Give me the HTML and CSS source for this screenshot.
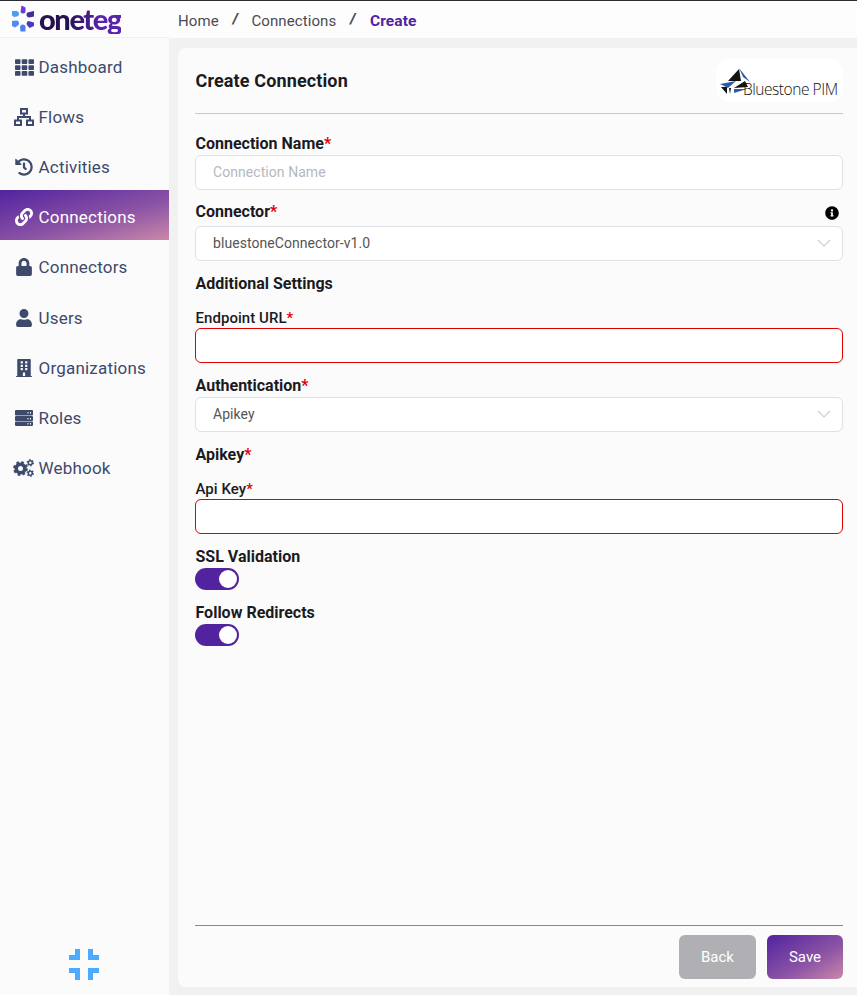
FILE: index.html
```html
<!DOCTYPE html>
<html lang="en">
<head>
<meta charset="utf-8">
<title>Create Connection</title>
<link rel="stylesheet" href="styles.css">
</head>
<body>
<div class="app">
  <aside class="side">
    <div class="brand">
      <svg class="brand-mark" viewBox="-12 -13.5 24 27" width="24" height="27">
        <path fill="#6d3bd6" d="M-1.500 -13 L2.500 -11 L2.500 -6.500 A2.800 2.800 0 0 1 -2.500 -6.500 Z"/>
        <path fill="#4a2a9c" d="M11 -7.500 L11 -2 L6.500 -1 A2.800 2.800 0 0 1 4.500 -6 Z"/>
        <path fill="#4a3ac0" d="M11 7.500 L6.500 9.500 L4.800 7.500 A2.800 2.800 0 0 1 5.500 2.500 L11 4 Z"/>
        <path fill="#4f7fe8" d="M2.500 13 L-2.500 13 L-3 8.500 A2.800 2.800 0 0 1 2.500 8 Z"/>
        <path fill="#4f8df0" d="M-11 7.500 L-11 2.500 L-6 2 A2.800 2.800 0 0 1 -5 7 L-8 9 Z"/>
        <path fill="#4aa0f0" d="M-11 -7.500 L-6.500 -7.500 A2.800 2.800 0 0 1 -6 -2 L-9 -1.500 L-11 -3 Z"/>
      </svg>
      <span class="brand-name">oneteg</span>
    </div>
    <nav class="nav">
      <a class="nav-item"><span class="nav-ico"><svg viewBox="0 0 512 512" width="19" height="19"><path d="M0 56q0-24 24-24h101q24 0 24 24v80q0 24-24 24H24q-24 0-24-24zM181 56q0-24 24-24h102q24 0 24 24v80q0 24-24 24H205q-24 0-24-24zM363 56q0-24 24-24h101q24 0 24 24v80q0 24-24 24H387q-24 0-24-24zM0 216q0-24 24-24h101q24 0 24 24v80q0 24-24 24H24q-24 0-24-24zM181 216q0-24 24-24h102q24 0 24 24v80q0 24-24 24H205q-24 0-24-24zM363 216q0-24 24-24h101q24 0 24 24v80q0 24-24 24H387q-24 0-24-24zM0 376q0-24 24-24h101q24 0 24 24v80q0 24-24 24H24q-24 0-24-24zM181 376q0-24 24-24h102q24 0 24 24v80q0 24-24 24H205q-24 0-24-24zM363 376q0-24 24-24h101q24 0 24 24v80q0 24-24 24H387q-24 0-24-24z"/></svg></span>Dashboard</a>
      <a class="nav-item"><span class="nav-ico"><svg viewBox="0 0 22 20" width="22" height="20"><path fill="none" stroke="currentColor" stroke-width="2" d="M8 2h6v4.500H8zM2 13.500h6V18H2zM14 13.500h6V18h-6zM11 6.500V10M5 13.500V10h12v3.500"/></svg></span>Flows</a>
      <a class="nav-item"><span class="nav-ico"><svg viewBox="0 0 512 512" width="18" height="18"><path d="M504 255.500c.3 136.600-111.200 248.400-247.800 248.500-59 0-113.200-20.500-155.800-54.900-11.100-8.900-11.900-25.500-1.800-35.600l11.300-11.300c8.600-8.600 22.400-9.600 31.900-2C173.100 425.100 212.800 440 256 440c101.700 0 184-82.300 184-184 0-101.700-82.300-184-184-184-48.800 0-93.100 19-126.100 49.900l50.800 50.800c10.100 10.100 2.900 27.300-11.300 27.300H24c-8.800 0-16-7.200-16-16V38.600c0-14.300 17.200-21.400 27.300-11.300l49.400 49.400C129.200 34.100 189.600 8 256 8c136.800 0 247.700 110.800 248 247.500zm-180.900 78.800l9.800-12.600c8.100-10.500 6.300-25.500-4.200-33.700L288 256.300V152c0-13.300-10.700-24-24-24h-16c-13.300 0-24 10.700-24 24v135.700l65.400 50.900c10.500 8.100 25.500 6.300 33.700-4.200z"/></svg></span>Activities</a>
      <a class="nav-item active"><span class="nav-ico"><svg viewBox="0 0 512 512" width="18" height="18"><path d="M326.600 185.400c59.700 59.800 58.900 155.700.4 214.600l-67.200 67.200c-59.300 59.300-155.700 59.300-215 0-59.300-59.300-59.300-155.700 0-215l37.100-37.100c9.800-9.800 26.800-3.300 27.300 10.600.6 17.700 3.800 35.500 9.700 52.700 2 5.800.6 12.300-3.800 16.600l-13.100 13.100c-28 28-28.900 73.700-1.200 102 28 28.600 74.100 28.700 102.300.5l67.200-67.200c28.200-28.200 28.100-73.800 0-101.800-3.700-3.700-7.400-6.600-10.300-8.600a16 16 0 0 1-6.900-12.600c-.4-10.600 3.300-21.500 11.700-29.800l21.100-21.100c5.500-5.500 14.200-6.200 20.600-1.700a152.500 152.500 0 0 1 20.500 17.200zM467.500 44.400c-59.300-59.300-155.700-59.300-215 0l-67.200 67.200c-.1.100-.3.300-.4.400-58.600 58.900-59.400 154.800.4 214.600a152.500 152.500 0 0 0 20.500 17.200c6.400 4.500 15.100 3.800 20.600-1.700l21.100-21.100c8.400-8.400 12.100-19.200 11.700-29.800a16 16 0 0 0-6.900-12.600c-2.900-2-6.600-4.900-10.300-8.600-28.100-28-28.200-73.600 0-101.800l67.200-67.200c28.200-28.200 74.300-28.100 102.300.5 27.700 28.300 26.800 74-1.200 102l-13.100 13.100c-4.400 4.300-5.800 10.800-3.800 16.600 5.900 17.200 9.100 35 9.700 52.700.5 13.900 17.500 20.400 27.300 10.600l37.100-37.100c59.300-59.300 59.300-155.700 0-215z"/></svg></span>Connections</a>
      <a class="nav-item"><span class="nav-ico"><svg viewBox="0 0 448 512" width="16" height="18"><path d="M400 224h-24v-72C376 68.200 307.800 0 224 0S72 68.200 72 152v72H48c-26.500 0-48 21.500-48 48v192c0 26.500 21.500 48 48 48h352c26.500 0 48-21.500 48-48V272c0-26.500-21.500-48-48-48zm-104 0H152v-72c0-39.700 32.300-72 72-72s72 32.300 72 72v72z"/></svg></span>Connectors</a>
      <a class="nav-item"><span class="nav-ico"><svg viewBox="0 0 448 512" width="16" height="18"><path d="M224 256c70.700 0 128-57.300 128-128S294.700 0 224 0 96 57.300 96 128s57.300 128 128 128zm89.600 32h-16.700c-22.200 10.200-46.900 16-72.900 16s-50.600-5.800-72.900-16h-16.700C60.200 288 0 348.200 0 422.400V464c0 26.500 21.500 48 48 48h352c26.500 0 48-21.500 48-48v-41.600c0-74.200-60.200-134.400-134.400-134.400z"/></svg></span>Users</a>
      <a class="nav-item"><span class="nav-ico"><svg viewBox="0 0 448 512" width="16" height="18"><path d="M436 480h-20V24c0-13.300-10.700-24-24-24H56C42.700 0 32 10.700 32 24v456H12c-6.600 0-12 5.400-12 12v20h448v-20c0-6.600-5.400-12-12-12zM128 76c0-6.600 5.400-12 12-12h40c6.600 0 12 5.400 12 12v40c0 6.600-5.400 12-12 12h-40c-6.600 0-12-5.400-12-12V76zm0 96c0-6.600 5.400-12 12-12h40c6.600 0 12 5.400 12 12v40c0 6.600-5.400 12-12 12h-40c-6.600 0-12-5.400-12-12v-40zm52 148h-40c-6.600 0-12-5.400-12-12v-40c0-6.600 5.400-12 12-12h40c6.600 0 12 5.400 12 12v40c0 6.600-5.400 12-12 12zm76 160h-64v-84c0-6.600 5.400-12 12-12h40c6.600 0 12 5.400 12 12v84zm64-172c0 6.600-5.400 12-12 12h-40c-6.600 0-12-5.400-12-12v-40c0-6.600 5.400-12 12-12h40c6.600 0 12 5.400 12 12v40zm0-96c0 6.600-5.400 12-12 12h-40c-6.600 0-12-5.400-12-12v-40c0-6.600 5.400-12 12-12h40c6.600 0 12 5.400 12 12v40zm0-96c0 6.600-5.400 12-12 12h-40c-6.600 0-12-5.400-12-12V76c0-6.600 5.400-12 12-12h40c6.600 0 12 5.400 12 12v40z"/></svg></span>Organizations</a>
      <a class="nav-item"><span class="nav-ico"><svg viewBox="0 0 18 16" width="18" height="16"><path d="M1 0h16q1 0 1 1v3.500q0 1-1 1H1q-1 0-1-1V1q0-1 1-1zM1 6h16v0q1 0 1 1v3q0 1-1 1H1q-1 0-1-1V7q0-1 1-1zM1 11.500h16q1 0 1 1V15q0 1-1 1H1q-1 0-1-1v-2.500q0-1 1-1z"/><path fill="#fbfbfc" d="M12.500 2h1v1.500h-1zM15 2h1v1.500h-1zM12.500 8h1v1.500h-1zM15 8h1v1.500h-1zM12.500 13h1v1.500h-1zM15 13h1v1.500h-1z"/></svg></span>Roles</a>
      <a class="nav-item"><span class="nav-ico"><svg viewBox="0 0 22 18" width="22" height="18"><g fill="none" stroke="currentColor"><circle cx="7.500" cy="9.500" r="4.300" stroke-width="3.600"/><circle cx="7.500" cy="9.500" r="6.200" stroke-width="2.400" stroke-dasharray="2.600 2.270"/><circle cx="17.300" cy="3.800" r="2" stroke-width="1.500"/><circle cx="17.300" cy="3.800" r="3.100" stroke-width="1.200" stroke-dasharray="1.500 1.750"/><circle cx="17.300" cy="14.200" r="2" stroke-width="1.500"/><circle cx="17.300" cy="14.200" r="3.100" stroke-width="1.200" stroke-dasharray="1.500 1.750"/></g></svg></span>Webhook</a>
    </nav>
    <div class="collapse">
      <svg viewBox="0 0 30 31" width="30" height="31"><path fill="none" stroke="#4dabff" stroke-width="5" d="M8.500 0v8.500H0M21.500 0v8.500H30M8.500 31V21.500H0M21.500 31V21.500H30"/></svg>
    </div>
  </aside>
  <div class="body">
    <header class="crumbs">
      <span class="crumb">Home</span><span class="sep">/</span>
      <span class="crumb">Connections</span><span class="sep">/</span>
      <span class="crumb current">Create</span>
    </header>
    <main class="main">
      <section class="card">
        <div class="card-head">
          <h1 class="title">Create Connection</h1>
          <div class="logo">
            <svg viewBox="0 0 33 28" width="33" height="28">
              <path fill="#141414" d="M9 14L20 2l2 12z"/>
              <path fill="#2e5cab" d="M20 1l11 14-7-5z"/>
              <path fill="#2e5cab" d="M1 17l16-3-8 7z"/>
              <path fill="#141414" d="M15 21l11-7 3 6z"/>
              <path fill="#141414" d="M2 20h6v7zM10 21h2l-1 6z"/>
              <path fill="#2e5cab" d="M15 26l13-4H15z"/>
            </svg>
            <span class="logo-text">Bluestone PIM</span>
          </div>
        </div>
        <form class="form">
          <div class="field"><label class="label">Connection Name<b class="req">*</b></label>
            <input class="input" type="text" placeholder="Connection Name"></div>
          <div class="field"><div class="label-row"><label class="label">Connector<b class="req">*</b></label>
            <svg class="info" viewBox="0 0 512 512" width="14" height="14"><path d="M256 8C119 8 8 119.100 8 256c0 137 111 248 248 248s248-111 248-248C504 119.100 393 8 256 8zm0 110c23.200 0 42 18.800 42 42s-18.800 42-42 42-42-18.800-42-42 18.800-42 42-42zm56 254c0 6.600-5.400 12-12 12h-88c-6.600 0-12-5.400-12-12v-24c0-6.600 5.400-12 12-12h12v-64h-12c-6.600 0-12-5.400-12-12v-24c0-6.600 5.400-12 12-12h64c6.600 0 12 5.400 12 12v100h12c6.600 0 12 5.400 12 12v24z"/></svg></div>
            <div class="select"><span>bluestoneConnector-v1.0</span><svg class="chev" viewBox="0 0 14 8" width="14" height="8"><path fill="none" stroke="#c9ced8" stroke-width="1.200" d="M1 1l6 6 6-6"/></svg></div></div>
          <div class="section">Additional Settings</div>
          <div class="field"><label class="label plain">Endpoint URL<span class="req">*</span></label>
            <input class="input error" type="text"></div>
          <div class="field"><label class="label">Authentication<b class="req">*</b></label>
            <div class="select"><span>Apikey</span><svg class="chev" viewBox="0 0 14 8" width="14" height="8"><path fill="none" stroke="#c9ced8" stroke-width="1.200" d="M1 1l6 6 6-6"/></svg></div></div>
          <div class="section">Apikey<b class="req">*</b></div>
          <div class="field"><label class="label plain">Api Key<span class="req">*</span></label>
            <input class="input error" type="text"></div>
          <div class="toggle-field"><label class="label">SSL Validation</label><span class="toggle"><i class="knob"></i></span></div>
          <div class="toggle-field"><label class="label">Follow Redirects</label><span class="toggle"><i class="knob"></i></span></div>
        </form>
        <footer class="foot">
          <button class="btn back" type="button">Back</button>
          <button class="btn save" type="button">Save</button>
        </footer>
      </section>
    </main>
  </div>
</div>
</body>
</html>
```
FILE: styles.css
```css
* { box-sizing: border-box; }
html, body { margin: 0; height: 100%; }
body { font-family: Roboto, "Liberation Sans", sans-serif; color: #1b1b1f; background: #f1f1f1; overflow: hidden; }
.app { display: flex; height: 995px; border-top: 1px solid #2b2b30; }
.side { width: 169px; flex: none; background: #fbfbfc; display: flex; flex-direction: column; }
.brand { height: 37px; margin-bottom: 2px; padding: 3px 0 0 11px; display: flex; align-items: flex-start; gap: 4px; background: #fdfdfe; border-bottom: 1px solid #f0f0f0; }
.brand-mark { flex: none; margin-top: 1px; }
.brand-name { font-family: Lato, sans-serif; font-weight: 900; font-size: 29px; line-height: 30px; letter-spacing: -1.4px; background: linear-gradient(90deg, #24124f 35%, #5a23ab 75%); -webkit-background-clip: text; background-clip: text; color: transparent; }
.nav { display: flex; flex-direction: column; }
.nav-item { height: 50.11px; display: flex; align-items: center; color: #3e4a6b; font-size: 17px; letter-spacing: .2px; padding: 4px 0 0 38.5px; position: relative; }
.nav-ico { position: absolute; left: 12px; width: 24px; display: flex; justify-content: center; }
.nav-ico svg { fill: currentColor; display: block; }
.nav-item.active { color: #fff; background: linear-gradient(165deg, #52239f 0%, #8d55a5 60%, #cb88a8 100%); }
.collapse { margin-top: auto; padding-bottom: 15px; padding-right: 1px; display: flex; justify-content: center; }
.body { flex: 1; min-width: 0; display: flex; flex-direction: column; }
.crumbs { height: 37px; flex: none; background: #fdfdfe; display: flex; align-items: center; padding: 3px 0 0 9px; font-size: 15px; color: #4b4b52; }
.crumb { letter-spacing: .1px; }
.crumb.current { color: #52239f; font-weight: 700; font-size: 15.5px; margin-left: 1px; }
.sep { margin: 0 13.5px 0 14px; font-style: italic; font-weight: 900; position: relative; top: -2px; }
.main { flex: 1; padding: 10px 0 8px 9px; min-height: 0; }
.card { height: 100%; background: #fbfbfc; border-radius: 8px 0 0 8px; padding: 0 14px 0 17px; display: flex; flex-direction: column; }
.card-head { height: 66px; flex: none; display: flex; align-items: center; justify-content: space-between; border-bottom: 1px solid #c8c8cc; }
.title { margin: 0; padding-left: .5px; font-size: 18px; font-weight: 700; color: #1b1b1f; letter-spacing: .13px; }
.logo { width: 127px; height: 43px; background: #fff; border-radius: 14px; display: flex; align-items: center; padding-left: 3px; }
.logo svg { flex: none; margin-right: -9px; }
.logo-text { font-family: "Open Sans", sans-serif; font-size: 15.5px; font-weight: 300; letter-spacing: -.45px; color: #111; margin-top: 16px; white-space: nowrap; }
.form { flex: 1; padding-top: 20px; display: flex; flex-direction: column; }
.field { display: flex; flex-direction: column; margin-bottom: 13px; }
.label { font-size: 16px; line-height: 19px; font-weight: 700; color: #1b1b1f; display: block; margin-bottom: 2px; padding-left: .5px; }
.label.plain { font-size: 15px; font-weight: 500; letter-spacing: .05px; padding-top: 1px; margin-bottom: 1px; line-height: 20px; height: 20px; }
.label-row { display: flex; justify-content: space-between; align-items: flex-start; height: 24px; margin-top: -1px; }
.info { margin: 4px 4px 0 0; }
.req { color: #e00000; font-weight: inherit; }
.input, .select { height: 35px; flex: none; width: 100%; border: 1px solid #dfe1e8; border-radius: 6px; background: #fff; font-family: Roboto, sans-serif; font-size: 14px; padding: 0 17px 2px; outline: none; letter-spacing: .06px; color: #555; }
.input::placeholder { color: #b5b8c0; opacity: 1; }
.input.error { border-color: #e00000; }
.select { display: flex; align-items: center; justify-content: space-between; padding-right: 11px; }
.section { font-size: 16px; line-height: 19px; font-weight: 700; margin-bottom: 14px; padding-left: .5px; }
.toggle-field { margin-bottom: 13px; }
.toggle { display: block; width: 44px; height: 22px; border-radius: 11px; background: #52239f; position: relative; }
.knob { position: absolute; right: 2px; top: 2px; width: 18px; height: 18px; border-radius: 50%; background: #fff; }
.foot { height: 62px; flex: none; border-top: 1px solid #888; display: flex; justify-content: flex-end; gap: 11px; padding-top: 9px; }
.btn { width: 77px; height: 44px; border: 0; border-radius: 6px; color: #fff; font-family: Roboto, sans-serif; font-size: 15px; }
.save { width: 76px; }
.back { background: #b0afb3; }
.save { background: linear-gradient(150deg, #52239f 0%, #8d55a5 60%, #cb88a8 100%); }
```
